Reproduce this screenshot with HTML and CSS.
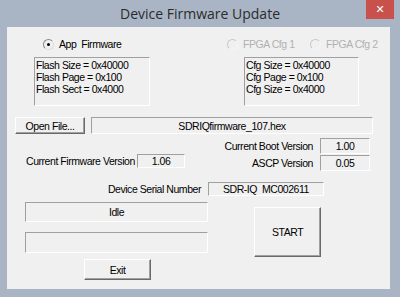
FILE: index.html
```html
<!DOCTYPE html>
<html lang="en">
<head>
    <meta charset="UTF-8">
    <title>Device Firmware Update</title>
    <link rel="stylesheet" href="styles.css">
</head>
<body>
    <div class="window">
        <div class="titlebar">
            <span class="title">Device Firmware Update</span>
            <span class="close">&#x2715;</span>
        </div>
        <div class="client">
            <div class="radios">
                <label class="radio radio-app"><span class="dot on"></span>App&nbsp; Firmware</label>
                <label class="radio radio-cfg1 disabled"><span class="dot"></span>FPGA Cfg 1</label>
                <label class="radio radio-cfg2 disabled"><span class="dot"></span>FPGA Cfg 2</label>
            </div>
            <div class="infos">
                <div class="info info-left">
                    Flash Size = 0x40000<br>
                    Flash Page = 0x100<br>
                    Flash Sect = 0x4000
                </div>
                <div class="info info-right">
                    Cfg Size = 0x40000<br>
                    Cfg Page = 0x100<br>
                    Cfg Size = 0x4000
                </div>
            </div>
            <div class="file-row">
                <button class="btn btn-open">Open File...</button>
                <div class="field field-file">SDRIQfirmware_107.hex</div>
            </div>
            <div class="versions">
                <div class="ver-left">
                    <span class="label">Current Firmware Version</span>
                    <div class="field field-ver">1.06</div>
                </div>
                <div class="ver-right">
                    <div class="ver-line">
                        <span class="label">Current Boot Version</span>
                        <div class="field field-ver">1.00</div>
                    </div>
                    <div class="ver-line">
                        <span class="label">ASCP Version</span>
                        <div class="field field-ver">0.05</div>
                    </div>
                </div>
            </div>
            <div class="serial-row">
                <span class="label">Device Serial Number</span>
                <div class="field field-serial">SDR-IQ&nbsp; MC002611</div>
            </div>
            <div class="status-row">
                <div class="status-col">
                    <div class="field field-status">Idle</div>
                    <div class="field field-status field-progress"></div>
                </div>
                <button class="btn btn-start">START</button>
            </div>
            <div class="exit-row">
                <button class="btn btn-exit">Exit</button>
            </div>
        </div>
    </div>
</body>
</html>
```

FILE: styles.css
```css
body {
    margin: 0;
    padding: 0;
    background: #a9b5c5;
}
.window {
    width: 400px;
    height: 297px;
    background: #a9b5c5;
    overflow: hidden;
}
.titlebar {
    height: 27px;
    display: flex;
    justify-content: center;
    align-items: center;
    position: relative;
}
.title {
    font-family: "Open Sans", sans-serif;
    font-size: 14px;
    color: #2b2b2b;
    margin-top: -1px;
}
.close {
    position: absolute;
    top: 0;
    right: 6px;
    width: 28px;
    height: 19px;
    background: #c8514c;
    color: #fff;
    font-family: "DejaVu Sans", sans-serif;
    font-size: 11px;
    font-weight: bold;
    display: flex;
    align-items: center;
    justify-content: center;
}
.client {
    margin-left: 7px;
    width: 383px;
    height: 262px;
    background: #f0f0f0;
    font-family: "Liberation Sans", Arial, sans-serif;
    font-size: 10.5px;
    letter-spacing: -0.45px;
    color: #000;
    overflow: hidden;
}
.radios {
    display: flex;
    height: 12px;
    padding-top: 11px;
    align-items: center;
}
.radio {
    display: flex;
    align-items: center;
    white-space: nowrap;
}
.radio-app {
    margin-left: 36px;
    width: 184px;
}
.radio-cfg1 {
    width: 83px;
}
.radio.disabled {
    color: #b0b0b0;
}
.dot {
    width: 9px;
    height: 9px;
    border-radius: 50%;
    border: 1px solid #a0a0a0;
    border-right-color: #e8e8e8;
    border-bottom-color: #e8e8e8;
    background: #f0f0f0;
    margin-right: 5px;
    position: relative;
}
.dot.on {
    border-color: #888 #ddd #ddd #888;
}
.dot.on::after {
    content: "";
    position: absolute;
    left: 3px;
    top: 3px;
    width: 3px;
    height: 3px;
    border-radius: 50%;
    background: #000;
}
.disabled .dot {
    border-color: #c8c8c8 #f4f4f4 #f4f4f4 #c8c8c8;
}
.infos {
    display: flex;
    margin-top: 7px;
}
.info {
    height: 46px;
    padding: 1px 0 0 1px;
    line-height: 12px;
    border: 1px solid;
    border-color: #a0a0a0 #fff #fff #a0a0a0;
    white-space: nowrap;
}
.info-left {
    margin-left: 27px;
    width: 113px;
}
.info-right {
    margin-left: 94px;
    width: 112px;
}
.field {
    border: 1px solid;
    border-color: #a0a0a0 #fff #fff #a0a0a0;
    box-sizing: border-box;
    display: flex;
    align-items: center;
    justify-content: center;
    white-space: nowrap;
}
.btn {
    box-sizing: border-box;
    background: #f0f0f0;
    border: 1px solid;
    border-color: #fff #696969 #696969 #fff;
    box-shadow: inset -1px -1px 0 #a0a0a0;
    font-family: "Liberation Sans", Arial, sans-serif;
    font-size: 10.5px;
    letter-spacing: -0.45px;
    color: #000;
    padding: 0;
}
.file-row {
    display: flex;
    margin-top: 11px;
    height: 17px;
}
.btn-open {
    margin-left: 8px;
    width: 70px;
    height: 17px;
}
.field-file {
    margin-left: 6px;
    width: 282px;
    height: 17px;
}
.versions {
    display: flex;
    margin-top: 4px;
}
.ver-left {
    display: flex;
    align-items: center;
    margin-top: 16px;
    height: 14px;
    margin-left: 19px;
}
.ver-left .label {
    width: 111px;
}
.ver-left .field-ver {
    width: 48px;
    height: 14px;
}
.ver-right {
    margin-left: auto;
    margin-right: 20px;
}
.ver-line {
    display: flex;
    align-items: center;
    justify-content: flex-end;
    height: 16px;
    margin-bottom: 1px;
}
.ver-line .label {
    margin-right: 7px;
}
.ver-line .field-ver {
    width: 50px;
    height: 16px;
}
.serial-row {
    display: flex;
    align-items: center;
    margin-top: 10px;
    height: 14px;
}
.serial-row .label {
    width: 194px;
    margin-right: 7px;
    text-align: right;
}
.field-serial {
    width: 116px;
    height: 14px;
}
.status-row {
    display: flex;
    margin-top: 6px;
}
.status-col {
    margin-left: 18px;
    width: 183px;
}
.field-status {
    height: 20px;
}
.field-progress {
    margin-top: 10px;
    height: 21px;
}
.btn-start {
    margin-left: 46px;
    margin-top: 5px;
    width: 67px;
    height: 50px;
}
.exit-row {
    display: flex;
    margin-top: 2px;
}
.btn-exit {
    margin-left: 77px;
    width: 67px;
    height: 21px;
}
```
